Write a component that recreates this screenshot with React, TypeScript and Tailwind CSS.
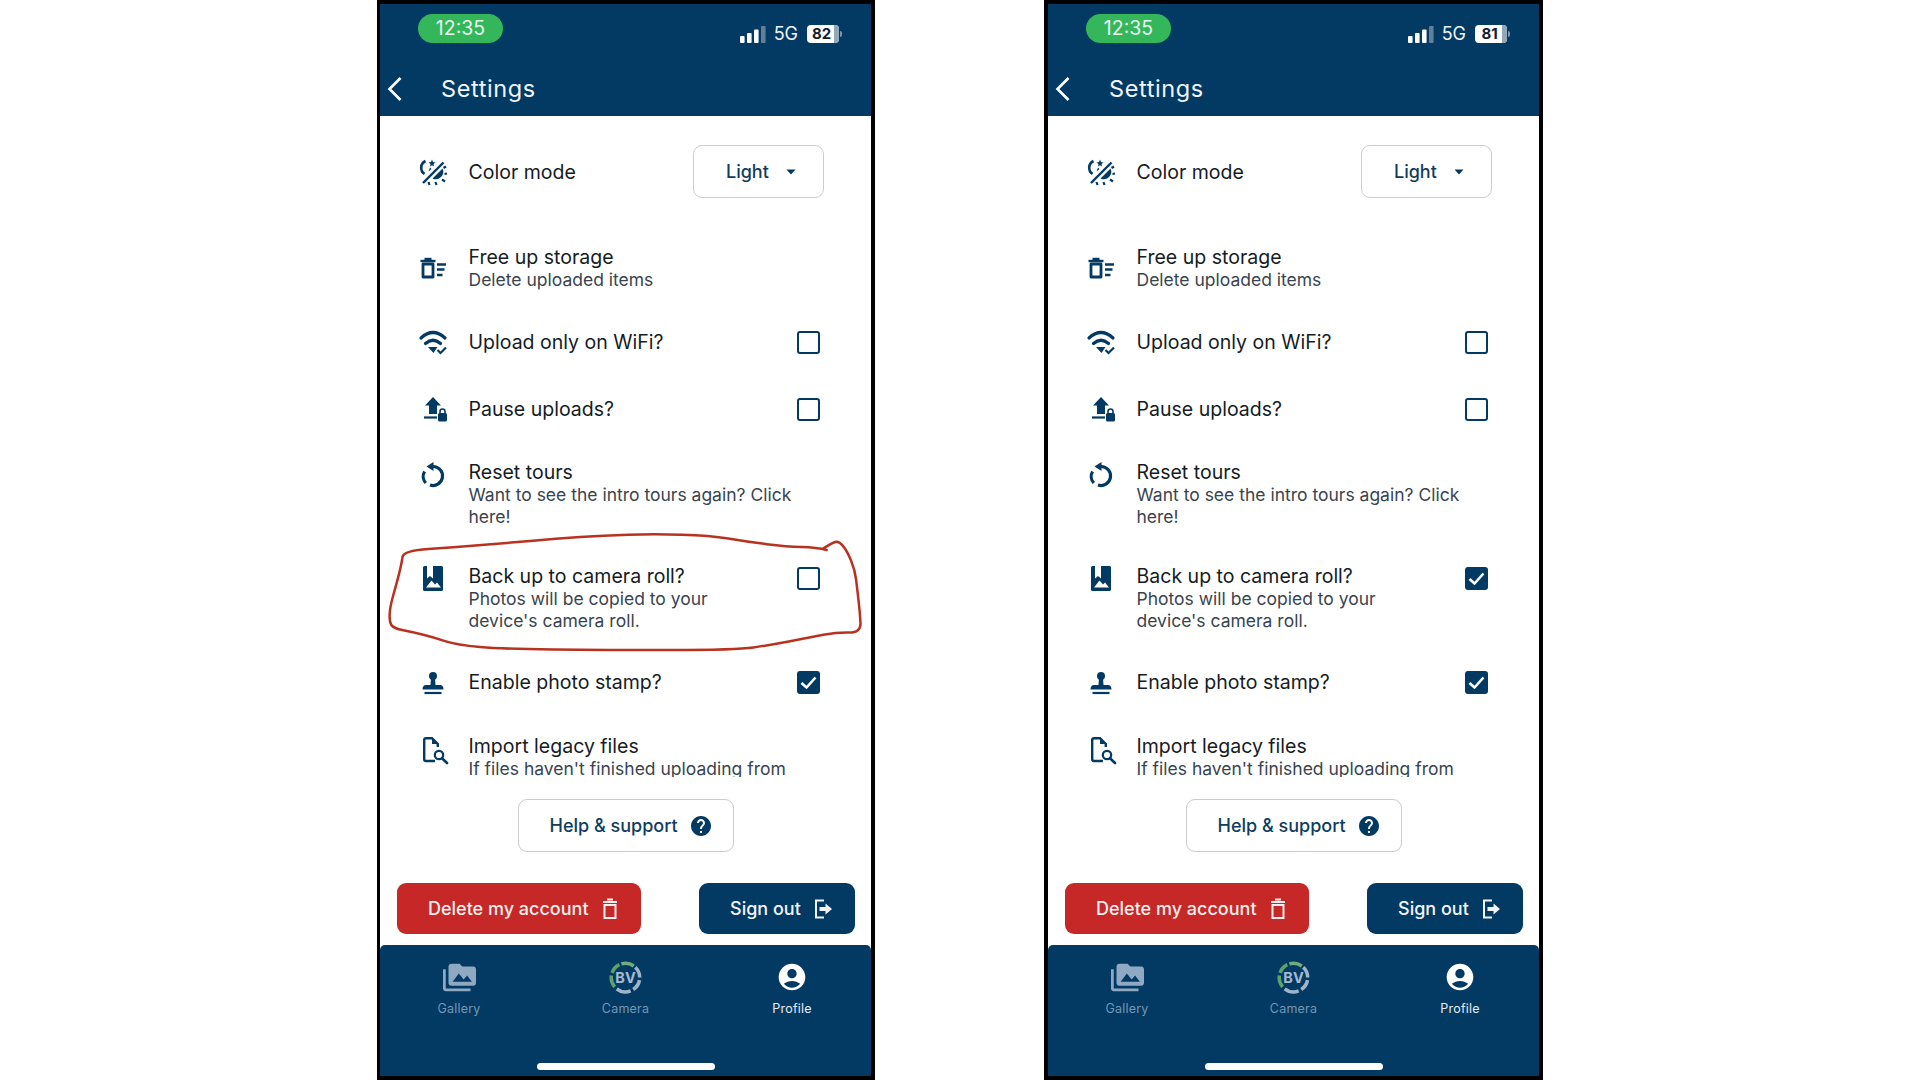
import React from "react";

const NAVY = "#033a63";

function Ico({ children }: { children: React.ReactNode }) {
  return (
    <svg viewBox="0 0 36 28" width="36" height="28" className="shrink-0 overflow-visible" fill="none">
      {children}
    </svg>
  );
}

const ColorIcon = () => (
  <Ico>
    <path d="M8 25 L28.5 4.5" stroke={NAVY} strokeWidth="2.4" />
    <path d="M10.5 3 A7.5 7.5 0 0 0 9.5 16" stroke={NAVY} strokeWidth="2.6" />
    <path d="M17 1.5 L18 4 L20.5 4.5 L18.5 6 L19 8.5 L17 7.2 L15 8.5 L15.5 6 L13.5 4.5 L16 4 Z" fill={NAVY} />
    <path d="M15 9.5 L16.5 11 L13.5 13.5 Z" fill={NAVY} />
    <path d="M17.5 20.5 L27.5 10.5 A7.5 7.5 0 0 1 17.5 20.5 Z" fill={NAVY} />
    <path d="M13.5 24 L14.5 27 M20.5 24 L21.5 27 M27 21.5 L30 23.5 M29.5 16 L32 15.5 M28.5 10 L31 8.5" stroke={NAVY} strokeWidth="2.2" />
  </Ico>
);
const StorageIcon = () => (
  <Ico>
    <path d="M8 10 H18 V23 H8 Z" stroke={NAVY} strokeWidth="2.8" strokeLinejoin="round" />
    <path d="M5.5 7 H20.5" stroke={NAVY} strokeWidth="2.4" />
    <path d="M9.5 5 H16.5" stroke={NAVY} strokeWidth="2.4" />
    <path d="M22 10.5 H31 M22 15.5 H29.5 M22 21 H27.5" stroke={NAVY} strokeWidth="2.4" />
  </Ico>
);
const WifiIcon = () => (
  <Ico>
    <path d="M6 10 Q18 -1 30 10" stroke={NAVY} strokeWidth="3.2" strokeLinecap="round" />
    <path d="M10.5 15.5 Q18 9 25.5 15.5" stroke={NAVY} strokeWidth="3.2" strokeLinecap="round" />
    <path d="M13 19 H22.5 L18.5 25 Z" fill={NAVY} />
    <path d="M22.5 22 L25.5 25 L31 19.5" stroke={NAVY} strokeWidth="2.2" />
  </Ico>
);
const PauseIcon = () => (
  <Ico>
    <path d="M18 2 L26 10.5 H22 V19 H14 V10.5 H10 Z" fill={NAVY} />
    <path d="M9 22.5 H22" stroke={NAVY} strokeWidth="2.2" />
    <rect x="23" y="18" width="9" height="8.5" rx="1.5" fill={NAVY} />
    <path d="M25 18 V16.5 A2.5 2.5 0 0 1 30 16.5 V18" stroke={NAVY} strokeWidth="1.6" />
  </Ico>
);
const ResetIcon = () => (
  <Ico>
    <path d="M18 6.5 A9.5 9.5 0 1 1 15 25" stroke={NAVY} strokeWidth="3.2" />
    <path d="M10.8 23 A9.5 9.5 0 0 1 9.6 11.5" stroke={NAVY} strokeWidth="3.2" />
    <path d="M11.5 6.5 L18.5 2 V11 Z" fill={NAVY} />
  </Ico>
);
const BackupIcon = () => (
  <Ico>
    <path d="M9.5 2 H12 V14.5 L15 12 L18 14.5 V2 H26.5 Q28 2 28 3.5 V25.5 Q28 27 26.5 27 H9.5 Q8 27 8 25.5 V3.5 Q8 2 9.5 2 Z" fill={NAVY} />
    <path d="M11 23.5 L16.5 16.5 L20 20.5 L22 18.5 L26 23.5 Z" fill="#ffffff" />
  </Ico>
);
const StampIcon = () => (
  <Ico>
    <circle cx="18" cy="8" r="4" fill={NAVY} />
    <path d="M16 10 H20 L20.5 17 H15.5 Z" fill={NAVY} />
    <path d="M7.5 21.5 Q7.5 17 11 17 H25 Q28.5 17 28.5 21.5 Z" fill={NAVY} />
    <path d="M9.5 25 H26.5" stroke={NAVY} strokeWidth="2.2" />
  </Ico>
);
const ImportIcon = () => (
  <Ico>
    <path d="M20 27 H11 Q9.2 27 9.2 25 V6 Q9.2 4.2 11 4.2 H17 L22.8 10 V13" stroke={NAVY} strokeWidth="2.4" />
    <path d="M17 3.5 L23.5 10 H17 Z" fill={NAVY} />
    <circle cx="24" cy="21" r="4.2" stroke={NAVY} strokeWidth="2.2" />
    <path d="M27 24.2 L32 29" stroke={NAVY} strokeWidth="2.6" strokeLinecap="round" />
  </Ico>
);

function Check({ on, nudge }: { on: boolean; nudge?: boolean }) {
  const pos = nudge ? "mt-[3px]" : "";
  return on ? (
    <div className={`w-[23px] h-[23px] shrink-0 rounded-[3px] bg-[#033a63] flex items-center justify-center ${pos}`}>
      <svg viewBox="0 0 23 23" width="23" height="23" fill="none">
        <path d="M4.5 12 L9.5 16.5 L18.5 6.5" stroke="#ffffff" strokeWidth="2.6" />
      </svg>
    </div>
  ) : (
    <div className={`w-[23px] h-[23px] shrink-0 rounded-[3px] border-[2.5px] border-[#033a63] bg-white ${pos}`} />
  );
}

function Row({
  icon,
  title,
  subs,
  check,
  center,
  className,
}: {
  icon: React.ReactNode;
  title: string;
  subs?: string[];
  check?: boolean;
  center?: boolean;
  className: string;
}) {
  const oneLine = !subs;
  return (
    <div className={`flex pl-[35px] pr-[51px] ${oneLine || center ? "items-center" : "items-start"} ${className}`}>
      {icon}
      <div className="ml-[17.5px] flex-1 min-w-0">
        <div className="text-[19.55px] leading-[24px] text-[#151c24]">{title}</div>
        {subs?.map((s) => (
          <div key={s} className="text-[17.5px] leading-[22px] text-[#3a444e] whitespace-nowrap">
            {s}
          </div>
        ))}
      </div>
      {check !== undefined && <Check on={check} nudge={!oneLine} />}
    </div>
  );
}

const pts: [number, number][] = [
  [1370, 750], [1340, 742], [1250, 740], [1130, 725], [1020, 706], [850, 702], [700, 706], [560, 716], [400, 730],
  [250, 742], [100, 752], [95, 790], [80, 850], [60, 920], [58, 965], [70, 985], [130, 997], [190, 1012], [260, 1035],
  [400, 1047], [700, 1050], [1100, 1050], [1200, 1035], [1320, 1012], [1400, 997], [1473, 998], [1470, 940], [1462, 870],
  [1455, 810], [1430, 750], [1405, 722], [1385, 730], [1360, 745],
];
function smooth(p: [number, number][]) {
  let d = `M${p[0][0]} ${p[0][1]}`;
  for (let i = 1; i < p.length - 1; i++) {
    const mx = (p[i][0] + p[i + 1][0]) / 2;
    const my = (p[i][1] + p[i + 1][1]) / 2;
    d += ` Q${p[i][0]} ${p[i][1]} ${mx} ${my}`;
  }
  const l = p[p.length - 1];
  return d + ` L${l[0]} ${l[1]}`;
}

function Annotation() {
  return (
    <svg
      viewBox="0 0 1560 1140"
      width="520"
      height="380"
      className="absolute left-[-10px] top-[296px] pointer-events-none"
      fill="none"
    >
      <path d={smooth(pts)} stroke="#b9321f" strokeWidth="7.5" strokeLinejoin="round" strokeLinecap="round" />
    </svg>
  );
}

function Signal() {
  return (
    <svg width="26" height="17" viewBox="0 0 26 17">
      <rect x="0" y="10" width="4.6" height="7" rx="1" fill="#ffffff" />
      <rect x="7" y="7" width="4.6" height="10" rx="1" fill="#ffffff" />
      <rect x="14" y="3.5" width="4.6" height="13.5" rx="1" fill="#ffffff" />
      <rect x="21" y="0" width="4.6" height="17" rx="1" fill="#5f7f9a" />
    </svg>
  );
}

function Battery({ level }: { level: number }) {
  return (
    <div className="flex items-center">
      <div className="w-[32px] h-[18px] rounded-[4px] bg-white flex overflow-hidden">
        <div className="flex-1 text-[15px] leading-[18px] font-bold text-center text-[#12222f] pl-[2px]">{level}</div>
        <div className="w-[5px] bg-[#92a7b8]" />
      </div>
      <div className="ml-[1px] w-[2px] h-[6px] rounded-r-[2px] bg-[#7f97ab]" />
    </div>
  );
}

function BvLogo() {
  return (
    <svg viewBox="0 0 32 32" width="33" height="33" fill="none">
      <path d="M10 3.5 A13.8 13.8 0 0 0 3 11.5" stroke="#5fa06c" strokeWidth="3.4" />
      <path d="M2.3 14 A13.8 13.8 0 0 0 5.5 25" stroke="#5fa06c" strokeWidth="3.4" />
      <path d="M12 2.8 A13.8 13.8 0 0 1 24 4.8" stroke="#6fae7c" strokeWidth="3.4" />
      <path d="M25.5 6 A13.8 13.8 0 0 1 29.8 16" stroke="#9db6cc" strokeWidth="3.4" />
      <path d="M29.6 18.5 A13.8 13.8 0 0 1 23.5 27.6" stroke="#9db6cc" strokeWidth="3.4" />
      <path d="M21 29 A13.8 13.8 0 0 1 7.5 27" stroke="#9db6cc" strokeWidth="3.4" />
      <text x="16" y="21" textAnchor="middle" fontSize="14" fontWeight="700" fill="#a3bbd0" fontFamily="Inter, sans-serif">
        BV
      </text>
    </svg>
  );
}

function NavItem({ icon, label, active }: { icon: React.ReactNode; label: string; active?: boolean }) {
  return (
    <div className="w-[166.5px] shrink-0 flex flex-col items-center">
      <div className="h-[32px] flex items-center justify-center">{icon}</div>
      <div
        className={`mt-[8px] text-[12.5px] leading-[16px] tracking-[0.2px] ${active ? "text-[#e6edf3]" : "text-[#7497b3]"}`}
      >
        {label}
      </div>
    </div>
  );
}

function Phone({
  battery,
  backup,
  annotate,
  frame,
}: {
  battery: number;
  backup: boolean;
  annotate?: boolean;
  frame: string;
}) {
  return (
    <div className={`relative h-[1080px] shrink-0 flex flex-col border-t-4 border-b-4 border-r-4 border-black bg-white ${frame}`}>
      <div className="w-full h-[112px] bg-[#033a63] shrink-0 flex flex-col">
        <div className="h-[56px] flex items-start pl-[38px] pr-[29px]">
          <div className="mt-[10px] w-[85px] h-[29px] rounded-full bg-[#34b75a] text-[#e9f6ee] text-[19.5px] leading-[29px] text-center">
            12:35
          </div>
          <div className="ml-auto mt-[21px] flex items-center">
            <Signal />
            <div className="ml-[8px] mr-[9px] text-[18px] leading-[18px] text-[#eef3f7]">5G</div>
            <Battery level={battery} />
          </div>
        </div>
        <div className="h-[56px] flex items-center pl-[6px] pt-[1px]">
          <svg width="18" height="26" viewBox="0 0 18 26" fill="none">
            <path d="M14.5 2 L3.5 13 L14.5 24" stroke="#ffffff" strokeWidth="2.6" />
          </svg>
          <div className="ml-[37px] text-[23.5px] leading-[30px] tracking-[0.6px] text-[#f2f5f8]">Settings</div>
        </div>
      </div>

      <div className="h-[661px] shrink-0 overflow-hidden">
        <div className="mt-[29px] h-[53px] flex items-center pl-[35px] pr-[47px]">
          <ColorIcon />
          <div className="ml-[17.5px] text-[19.55px] leading-[24px] text-[#151c24]">Color mode</div>
          <div className="ml-auto w-[131px] h-[53px] rounded-[9px] border border-[#c9cdd0] flex items-center pl-[32px]">
            <span className="text-[18px] font-medium text-[#0f3d60]">Light</span>
            <svg width="10" height="6" viewBox="0 0 10 6" className="ml-[17px]">
              <path d="M0.5 0.5 H9.5 L5 5.5 Z" fill={NAVY} />
            </svg>
          </div>
        </div>
        <Row className="mt-[47px]" center icon={<StorageIcon />} title="Free up storage" subs={["Delete uploaded items"]} />
        <Row className="mt-[39px] h-[24px]" icon={<WifiIcon />} title="Upload only on WiFi?" check={false} />
        <Row className="mt-[43px] h-[24px]" icon={<PauseIcon />} title="Pause uploads?" check={false} />
        <Row
          className="mt-[39px]"
          icon={<ResetIcon />}
          title="Reset tours"
          subs={["Want to see the intro tours again? Click", "here!"]}
        />
        <Row
          className="mt-[36px]"
          icon={<BackupIcon />}
          title="Back up to camera roll?"
          subs={["Photos will be copied to your", "device's camera roll."]}
          check={backup}
        />
        <Row className="mt-[38px] h-[24px]" icon={<StampIcon />} title="Enable photo stamp?" check={true} />
        <Row className="mt-[40px]" icon={<ImportIcon />} title="Import legacy files" subs={["If files haven't finished uploading from"]} />
      </div>

      <div className="flex justify-center mt-[22px]">
        <div className="w-[216px] h-[53px] rounded-[9px] border border-[#c9cdd0] flex items-center pl-[31px]">
          <span className="text-[18px] font-medium text-[#0f3d60]">Help &amp; support</span>
          <svg width="24" height="24" viewBox="0 0 24 24" className="ml-[11px]">
            <path
              fill={NAVY}
              d="M12 2C6.48 2 2 6.48 2 12s4.48 10 10 10 10-4.48 10-10S17.52 2 12 2zm1 17h-2v-2h2v2zm2.07-7.75l-.9.92C13.45 12.9 13 13.5 13 15h-2v-.5c0-1.1.45-2.1 1.17-2.83l1.24-1.26c.37-.36.59-.86.59-1.41 0-1.1-.9-2-2-2s-2 .9-2 2H8c0-2.21 1.79-4 4-4s4 1.79 4 4c0 .88-.36 1.68-.93 2.25z"
            />
          </svg>
        </div>
      </div>

      <div className="flex justify-between mt-[31px] pl-[17px] pr-[16px]">
        <div className="w-[244px] h-[51px] rounded-[9px] bg-[#c62828] flex items-center pl-[31px] text-white">
          <span className="text-[18px] font-medium text-[#fbeeee]">Delete my account</span>
          <svg width="16" height="22" viewBox="0 0 16 22" className="ml-[13px]" fill="none">
            <path d="M2.5 7 H13.5 V20 H2.5 Z" stroke="#fbeeee" strokeWidth="2" />
            <path d="M1 4 H15 M5 1.5 H11" stroke="#fbeeee" strokeWidth="2" />
          </svg>
        </div>
        <div className="w-[156px] h-[51px] rounded-[9px] bg-[#033a63] flex items-center pl-[31px]">
          <span className="text-[18px] font-medium text-[#f2f5f8]">Sign out</span>
          <svg width="19" height="20" viewBox="0 0 19 20" className="ml-[13px]" fill="none">
            <path d="M10 1.5 H2 V18.5 H10" stroke="#f2f5f8" strokeWidth="2" />
            <path d="M5.5 8 H11.5 V4.5 L18 10 L11.5 15.5 V12 H5.5 Z" fill="#f2f5f8" />
          </svg>
        </div>
      </div>

      <div className="mt-[11px] flex-1 bg-[#033a63] rounded-t-[5px] flex flex-col items-center">
        <div className="flex justify-center mt-[16px] w-full">
          <NavItem
            label="Gallery"
            icon={
              <svg width="33" height="33" viewBox="0 0 24 24">
                <path
                  fill="#8ea9c1"
                  d="M2 6H0v5h.01L0 20c0 1.1.9 2 2 2h18v-2H2V6zm20-2h-8l-2-2H6c-1.1 0-1.99.9-1.99 2L4 16c0 1.1.9 2 2 2h16c1.1 0 2-.9 2-2V6c0-1.1-.9-2-2-2zM7 15l4.5-6 3.5 4.51 2.5-3.01L21 15H7z"
                />
              </svg>
            }
          />
          <NavItem label="Camera" icon={<BvLogo />} />
          <NavItem
            label="Profile"
            active
            icon={
              <svg width="32" height="32" viewBox="0 0 24 24">
                <path
                  fill="#ffffff"
                  d="M12 2C6.48 2 2 6.48 2 12s4.48 10 10 10 10-4.48 10-10S17.52 2 12 2zm0 4c1.93 0 3.5 1.57 3.5 3.5S13.93 13 12 13s-3.5-1.57-3.5-3.5S10.07 6 12 6zm0 14c-2.03 0-4.43-.82-6.14-2.88C7.55 15.8 9.68 15 12 15s4.45.8 6.14 2.12C16.43 19.18 14.03 20 12 20z"
                />
              </svg>
            }
          />
        </div>
        <div className="mt-auto mb-[6px] w-[178px] h-[7px] rounded-full bg-white" />
      </div>

      {annotate && <Annotation />}
    </div>
  );
}

export default function App() {
  return (
    <div className="w-[1920px] h-[1080px] bg-white flex justify-center gap-[169px] overflow-hidden font-['Inter',sans-serif]">
      <Phone battery={82} backup={false} annotate frame="border-l-[3px] w-[498px]" />
      <Phone battery={81} backup={true} frame="border-l-4 w-[499px]" />
    </div>
  );
}
